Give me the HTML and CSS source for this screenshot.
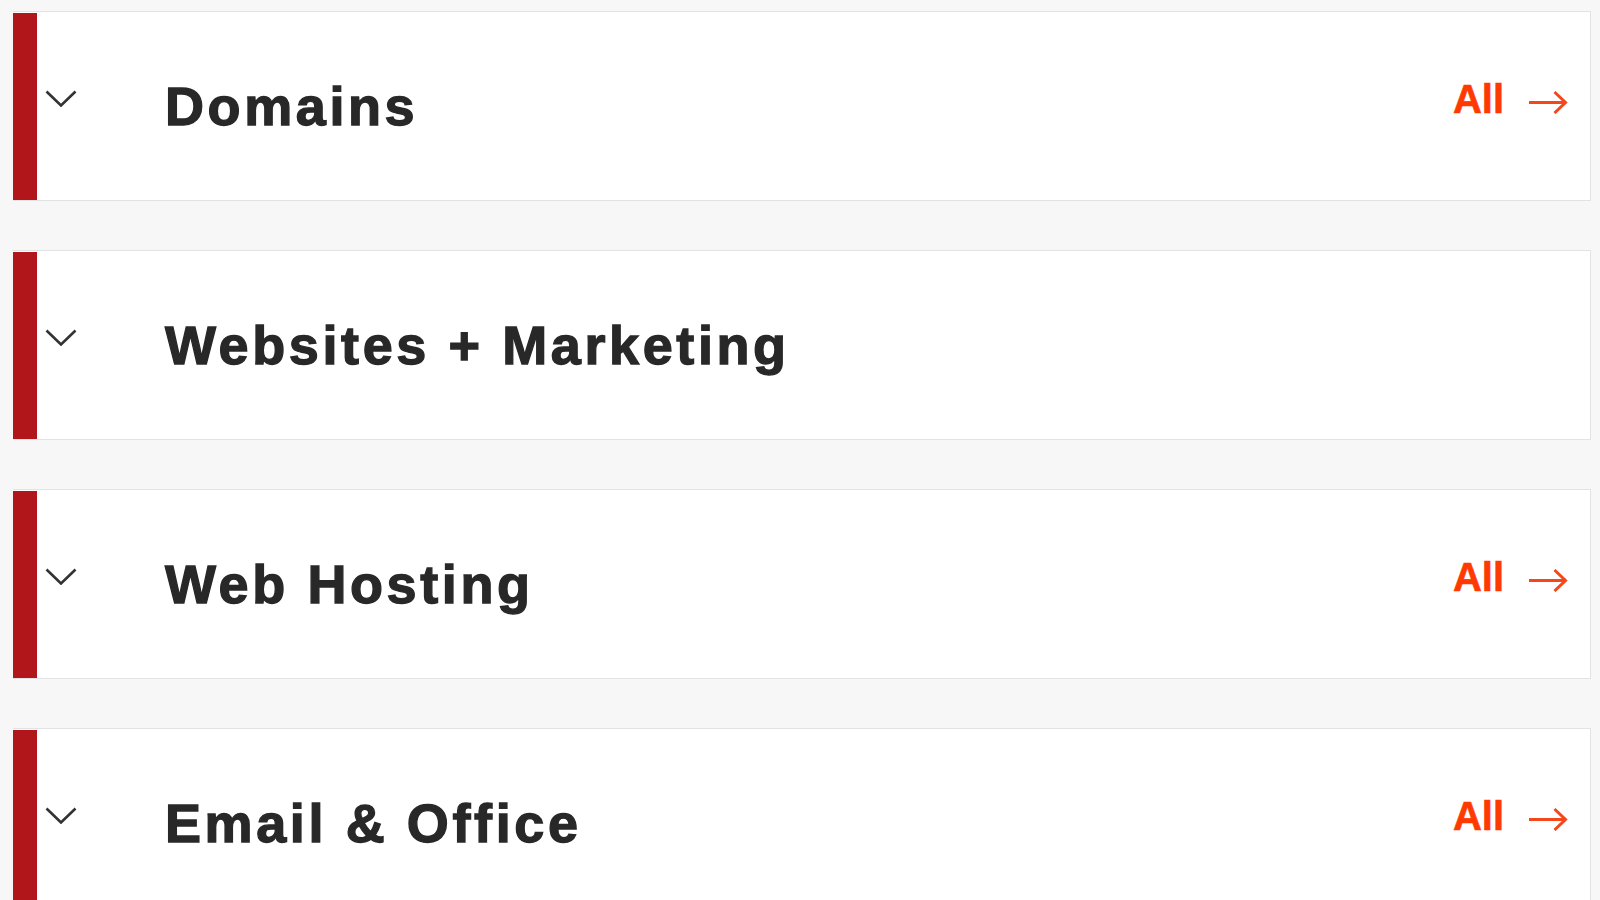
FILE: index.html
```html
<!DOCTYPE html>
<html lang="en">
<head>
<meta charset="utf-8">
<title>Products</title>
<link rel="stylesheet" href="styles.css">
</head>
<body>
<div class="list">
  <div class="card">
    <span class="bar"></span>
    <svg class="chev" width="32" height="17" viewBox="0 0 32 17"><polyline points="1.5,1.5 16,15.5 30.5,1.5" fill="none" stroke="#333" stroke-width="2.6"/></svg>
    <h2 class="title">Domains</h2>
    <a class="all" href="#">All <svg class="arrow" width="39" height="24" viewBox="0 0 39 24"><path d="M0 12.5H36M25.5 2L36.5 12.5L25.5 23" fill="none" stroke="#f4471c" stroke-width="3"/></svg></a>
  </div>
  <div class="card">
    <span class="bar"></span>
    <svg class="chev" width="32" height="17" viewBox="0 0 32 17"><polyline points="1.5,1.5 16,15.5 30.5,1.5" fill="none" stroke="#333" stroke-width="2.6"/></svg>
    <h2 class="title">Websites + Marketing</h2>
  </div>
  <div class="card">
    <span class="bar"></span>
    <svg class="chev" width="32" height="17" viewBox="0 0 32 17"><polyline points="1.5,1.5 16,15.5 30.5,1.5" fill="none" stroke="#333" stroke-width="2.6"/></svg>
    <h2 class="title">Web Hosting</h2>
    <a class="all" href="#">All <svg class="arrow" width="39" height="24" viewBox="0 0 39 24"><path d="M0 12.5H36M25.5 2L36.5 12.5L25.5 23" fill="none" stroke="#f4471c" stroke-width="3"/></svg></a>
  </div>
  <div class="card">
    <span class="bar"></span>
    <svg class="chev" width="32" height="17" viewBox="0 0 32 17"><polyline points="1.5,1.5 16,15.5 30.5,1.5" fill="none" stroke="#333" stroke-width="2.6"/></svg>
    <h2 class="title">Email &amp; Office</h2>
    <a class="all" href="#">All <svg class="arrow" width="39" height="24" viewBox="0 0 39 24"><path d="M0 12.5H36M25.5 2L36.5 12.5L25.5 23" fill="none" stroke="#f4471c" stroke-width="3"/></svg></a>
  </div>
</div>
</body>
</html>
```
FILE: styles.css
```css
html, body {
  margin: 0;
  padding: 0;
  background: #f7f7f7;
  font-family: "Liberation Sans", Arial, sans-serif;
}
.list {
  display: flex;
  flex-direction: column;
  gap: 49px;
  padding: 11px 9px 0 13px;
}
.card {
  display: flex;
  align-items: center;
  box-sizing: border-box;
  height: 190px;
  flex-shrink: 0;
  background: #fff;
  border: 1px solid #e3e3e3;
  border-left: none;
  padding: 0 22px 0 0;
}
.bar {
  align-self: stretch;
  width: 24px;
  flex-shrink: 0;
  background: #b1161b;
  margin: 1px 8px 0 0;
}
.chev {
  flex-shrink: 0;
  margin-bottom: 16px;
}
.title {
  margin: 0 0 0 88px;
  font-size: 54px;
  font-weight: bold;
  letter-spacing: 3.6px;
  color: #282828;
  -webkit-text-stroke: 1.3px #282828;
  flex: 1;
}
.all {
  display: flex;
  align-items: center;
  gap: 25px;
  margin-bottom: 14px;
  font-size: 40px;
  font-weight: bold;
  color: #ff3a00;
  -webkit-text-stroke: 0.6px #ff3a00;
  text-decoration: none;
}
.arrow {
  margin-top: 6px;
}
```
